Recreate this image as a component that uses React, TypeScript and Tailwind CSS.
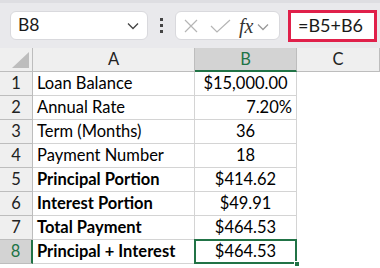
import React from "react";

type Row = {
  label: string;
  value: string;
  bold?: boolean;
  align?: "center" | "right";
};

const rows: Row[] = [
  { label: "Loan Balance", value: "$15,000.00" },
  { label: "Annual Rate", value: "7.20%", align: "right" },
  { label: "Term (Months)", value: "36" },
  { label: "Payment Number", value: "18" },
  { label: "Principal Portion", value: "$414.62", bold: true },
  { label: "Interest Portion", value: "$49.91", bold: true },
  { label: "Total Payment", value: "$464.53", bold: true },
  { label: "Principal + Interest", value: "$464.53", bold: true },
];

const Chevron = ({ color }: { color: string }) => (
  <svg width="12" height="8" viewBox="0 0 12 8" fill="none">
    <path d="M1 1.5 L6 6.5 L11 1.5" stroke={color} strokeWidth="1.3" />
  </svg>
);

const App: React.FC = () => {
  const selected = 7;

  return (
    <div className="w-[380px] h-[268px] bg-white overflow-hidden font-['Lato','Liberation_Sans',sans-serif] text-[16.5px] text-black">
      {/* ===== formula bar ===== */}
      <div className="h-[48px] bg-[#e9e9ec] border-t-[3px] border-[#dedee2] flex items-center pl-[10px]">
        <div className="w-[138px] h-[29px] bg-white rounded-[6px] border border-[#d9d9dd] flex items-center justify-between pl-[7px] pr-[8px]">
          <span className="text-[17.5px] text-[#1a1a1a]">B8</span>
          <Chevron color="#444" />
        </div>

        <div className="w-[27px] flex flex-col items-center gap-[3px]">
          <div className="w-[3px] h-[3px] bg-[#444]" />
          <div className="w-[3px] h-[3px] bg-[#444]" />
          <div className="w-[3px] h-[3px] bg-[#444]" />
        </div>

        <div className="w-[105px] h-[29px] bg-white rounded-[6px] border border-[#d9d9dd] flex items-center pl-[7px]">
          <svg width="16" height="16" viewBox="0 0 16 16" fill="none">
            <path d="M2 2 L14 14 M14 2 L2 14" stroke="#b5b5b5" strokeWidth="1.2" />
          </svg>
          <svg className="ml-[11px]" width="21" height="16" viewBox="0 0 21 16" fill="none">
            <path d="M1 8 L7 14 L20 2" stroke="#b5b5b5" strokeWidth="1.2" />
          </svg>
          <span className="ml-[8px] font-['Liberation_Serif',serif] italic text-[20px] text-[#333] leading-none">
            fx
          </span>
          <span className="ml-[4px] mt-[2px]">
            <Chevron color="#9a9a9a" />
          </span>
        </div>

        <div className="ml-[8px] w-[89px] h-[32px] bg-white border-[3px] border-[#e0204a] flex items-center pl-[7px]">
          <span className="text-[18px] text-[#1a1a1a]">=B5+B6</span>
        </div>
      </div>

      {/* ===== grid ===== */}
      <div className="grid grid-cols-[33px_162px_102px_83px]">
        {/* header row */}
        <div className="h-[24px] bg-[#efefef] border-r border-b border-[#bdbdbd] relative">
          <svg className="absolute right-[3px] bottom-[3px]" width="17" height="16" viewBox="0 0 17 16">
            <path d="M17 0 L17 16 L0 16 Z" fill="#bdbdbd" />
          </svg>
        </div>
        <div className="h-[24px] bg-[#efefef] border-r border-b border-[#bdbdbd] flex items-center justify-center text-[#222]">
          A
        </div>
        <div className="h-[24px] bg-[#d3d3d3] border-r border-[#bdbdbd] border-b-2 border-b-[#217346] flex items-center justify-center text-[#217346]">
          B
        </div>
        <div className="h-[24px] bg-[#efefef] border-r border-b border-[#bdbdbd] flex items-center justify-center text-[#222]">
          C
        </div>

        {rows.map((r, i) => {
          const isSel = i === selected;
          return (
            <React.Fragment key={i}>
              <div
                className={
                  isSel
                    ? "h-[24px] bg-[#d3d3d3] border-r-2 border-r-[#217346] border-b border-[#bdbdbd] flex items-center justify-center text-[#217346]"
                    : "h-[24px] bg-[#efefef] border-r border-b border-[#bdbdbd] flex items-center justify-center text-[#222]"
                }
              >
                {i + 1}
              </div>
              <div
                className={
                  "h-[24px] border-r border-b border-[#d4d4d4] flex items-center pl-[4px] whitespace-nowrap " +
                  (r.bold ? "font-bold" : "")
                }
              >
                {r.label}
              </div>
              <div
                className={
                  "h-[24px] border-r border-b border-[#d4d4d4] flex items-center relative " +
                  (r.align === "right" ? "justify-end pr-[4px]" : "justify-center")
                }
              >
                {r.value}
                {isSel && (
                  <>
                    <div className="absolute -left-[1px] -top-[1px] -right-[1px] -bottom-[1px] border-2 border-[#217346]" />
                    <div className="absolute -right-[4px] -bottom-[4px] w-[6px] h-[6px] bg-[#217346] border border-white" />
                  </>
                )}
              </div>
              <div className="h-[24px]" />
            </React.Fragment>
          );
        })}
      </div>
    </div>
  );
};

export default App;
